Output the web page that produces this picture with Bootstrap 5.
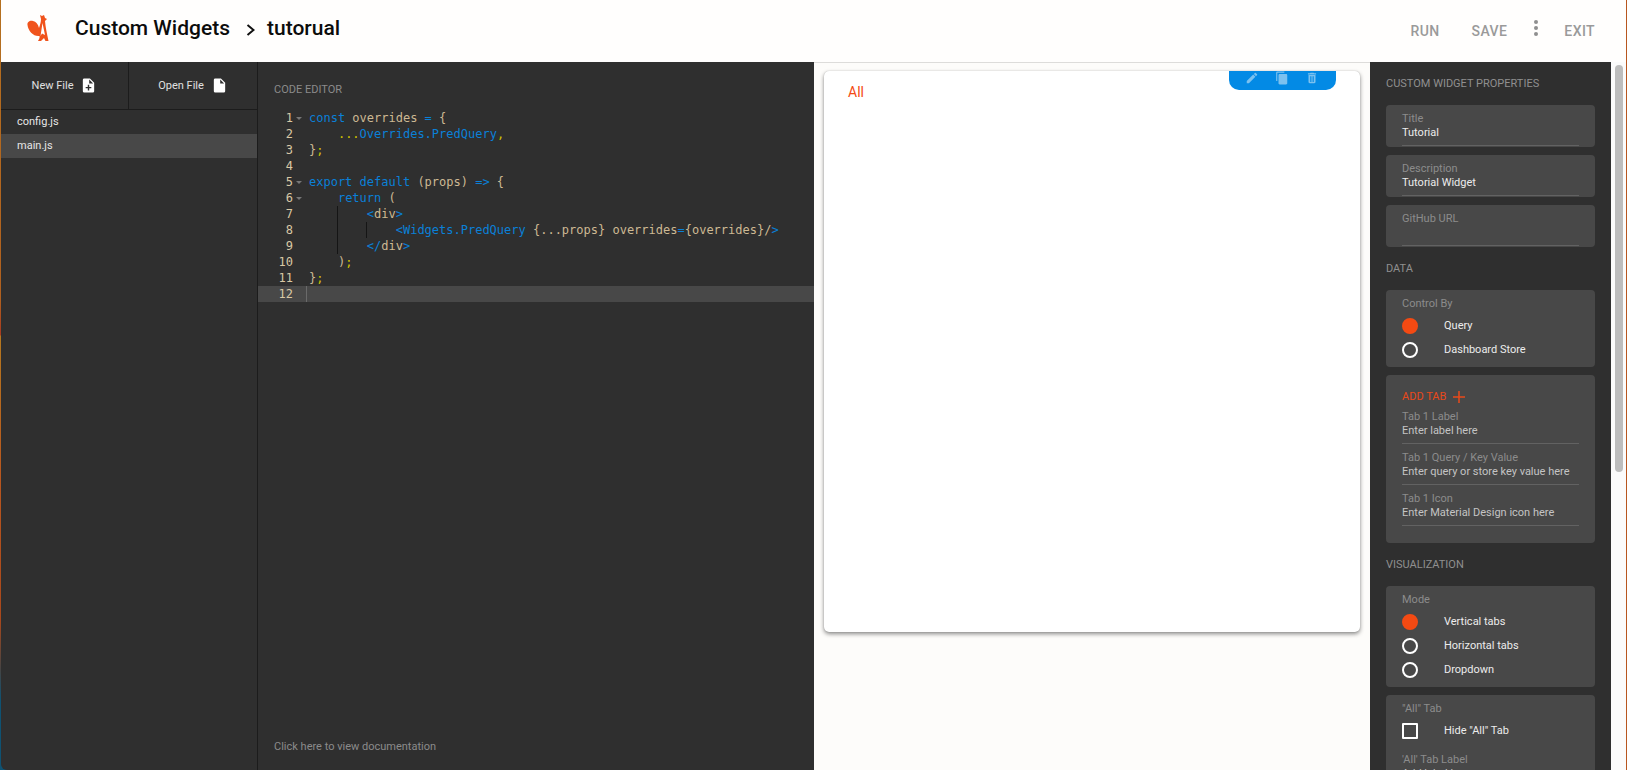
<!DOCTYPE html>
<html lang="en">
<head>
  <meta charset="UTF-8" />
  <meta name="viewport" content="width=device-width, initial-scale=1" />
  <title>Custom Widgets</title>
  <link href="https://cdn.jsdelivr.net/npm/bootstrap@5.3.0/dist/css/bootstrap.min.css" rel="stylesheet" />
  <style>
    html, body { height: 770px; overflow: hidden; }
    body { font-family: Roboto, "Liberation Sans", sans-serif; background: #fdfdfc; font-size: 11px; }
    .app-frame {
      height: 770px; padding-left: 1px; border-right: 1px solid #b8561f;
      background: linear-gradient(#b5701f 0, #b0601f 300px, #a83a20 335px, #b5781f 336px, #b8561f 480px, #a8481c 620px, #444 670px, #0f5272 700px) left top / 1px 100% no-repeat;
    }

    .top-bar { height: 62px; background: #fffefd; padding: 0 31px 0 25px; }
    .logo-svg { width: 26px; height: 28px; margin: -6px 23px 0 0; }
    .crumb { font-size: 21px; font-weight: 500; color: #0c0c0c; line-height: 1; margin-top: -6px; }
    .crumb-sep { width: 9px; height: 14px; margin: -3px 12px 0 16px; }
    .top-btn { font-size: 14px; font-weight: 500; color: #9a9a9a; letter-spacing: .4px; }
    .top-dots { width: 4px; margin: -4px 26px 0 27px; }
    .top-dots i { display: block; width: 4px; height: 4px; border-radius: 50%; background: #8f8f8f; margin-bottom: 2px; }

    .work-area { height: 708px; background: #0f5272; }
    .file-side { width: 257px; background: #2f2f2f; border-right: 1px solid #1c1c1c; color: #e6e6e6; border-bottom-left-radius: 6px; }
    .file-actions { height: 48px; border-bottom: 1px solid #1c1c1c; }
    .file-action { color: #e0e0e0; font-size: 11px; padding-top: 2px; }
    .file-new { width: 127px; }
    .file-open { flex: 1; border-left: 1px solid #1c1c1c; }
    .file-action svg { width: 17px; height: 17px; margin: -2px 0 0 7px; }
    .file-row { height: 24px; padding-left: 16px; line-height: 24px; }
    .file-row.is-open { background: #484848; }

    .editor-pane { width: 556px; background: #2f2f2f; }
    .pane-head { color: #8b8b8b; font-size: 11px; padding: 21px 0 0 16px; line-height: 14px; height: 48px; }
    .code-lines { font-family: "DejaVu Sans Mono", monospace; font-size: 12px; line-height: 16px; color: #cdb993; margin: 0; }
    .code-line { height: 16px; }
    .code-line.is-active { background: #484848; }
    .gutter-num { width: 35px; text-align: right; color: #d9c8a5; }
    .gutter-fold { width: 16px; position: relative; }
    .gutter-fold.has-fold::after { content: ""; position: absolute; left: 3px; top: 7px; border: 3px solid transparent; border-top: 3px solid #777; border-bottom: 0; }
    .code-text { white-space: pre; position: relative; }
    .is-active .code-text { border-left: 1px solid #6a6a6a; margin-left: -3px; height: 16px; }
    .tk-b { color: #0a80d8; }
    .tk-y { color: #cfc400; }
    .guide { position: absolute; top: 0; bottom: 0; width: 1px; background: #151515; }
    .doc-hint { color: #8b8b8b; font-size: 11px; padding: 0 0 15px 16px; }

    .preview-pane { width: 556px; background: #fdfcfa; border-top: 1px solid #dddcda; padding: 8px 10px 0 10px; }
    .widget-box { height: 561px; background: #fff; border-radius: 5px; box-shadow: 0 2px 4px rgba(0,0,0,.45), 0 0 1px rgba(0,0,0,.25); padding: 12px 0 0 24px; overflow: hidden; }
    .all-tab { color: #f44a13; font-size: 14px; line-height: 18px; }
    .tool-pill { position: absolute; top: 0; right: 24px; width: 107px; height: 19px; background: #038ae5; border-radius: 0 0 10px 10px; padding: 0 17px 6px 16px; }
    .tool-pill svg { width: 14px; height: 14px; fill: #7cc1ef; }

    .prop-pane { width: 241px; background: #2f2f2f; padding: 15px 16px 0 16px; overflow: hidden; color: #e6e6e6; }
    .prop-head { color: #8f8f8f; font-size: 11px; line-height: 14px; margin-bottom: 14px; }
    .prop-head-gap { margin-top: 15px; }
    .prop-group { background: #484848; border-radius: 4px; padding: 0 16px; margin-bottom: 8px; }
    .prop-field { height: 42px; padding-top: 7px; }
    .prop-label { color: #8c8c8c; font-size: 11px; line-height: 14px; }
    .prop-value { color: #ececec; font-size: 11px; line-height: 14px; height: 14px; }
    .prop-line { border-bottom: 1px solid #626262; margin-top: 5px; }
    .hint-value { color: #c4c4c4; }
    .tab-block { padding-top: 14px; height: 168px; }
    .add-tab { color: #e9491a; font-size: 11px; line-height: 16px; margin-bottom: 5px; }
    .add-tab svg { width: 12px; height: 12px; margin-left: 7px; }
    .tab-field { height: 41px; }
    .opt-row { height: 24px; }
    .opt-first { margin-top: 3px; }
    .opt-row .form-check-input { width: 16px; height: 16px; margin: 0 26px 0 0; background: transparent; border: 2px solid #fff; box-shadow: none; flex: none; }
    .opt-row .form-check-input:checked { background: #f44a13; background-image: none; border-color: #f44a13; }
    .opt-row .form-check-input[type=checkbox] { border-radius: 1px; }
    .opt-row label { color: #ececec; font-size: 11px; margin-top: 1px; }
    .opts-head { padding-top: 7px; }
    .opts-block { padding-bottom: 5px; }
    .all-label { margin-top: 10px; }

    .scroll-rail { width: 15px; background: #fbfbfb; padding: 3px 3px 0 4px; }
    .scroll-thumb { height: 407px; background: #bdbdbd; border-radius: 4px; }
  </style>
</head>
<body>

<div class="app-frame">
  <!-- header -->
  <header class="top-bar d-flex align-items-center">
    <svg class="logo-svg" viewBox="6 4 26 28">
      <path fill="#f0531c" d="M20 5l2 1 2-1 1 3 2 1-2 2c.5 6 2 13 3.500 20h-3L24 28l-3 3h-3c1-2 2-3 1.500-5C14 27 8 21 7.500 15 7 12 10 10 13 11c3 .5 5 3 6 7 1-3 2-6 2-9z"/>
      <path fill="#fff" d="M22.500 13L25 25l-3-1.500-1.500 2.500z"/>
    </svg>
    <span class="crumb">Custom Widgets</span>
    <svg class="crumb-sep" viewBox="0 0 9 14"><path d="M1.500 2l6 5-6 5" fill="none" stroke="#111" stroke-width="2"/></svg>
    <span class="crumb">tutorual</span>
    <div class="ms-auto d-flex align-items-center">
      <span class="top-btn me-4 pe-2">RUN</span>
      <span class="top-btn">SAVE</span>
      <span class="top-dots"><i></i><i></i><i></i></span>
      <span class="top-btn">EXIT</span>
    </div>
  </header>

  <div class="work-area d-flex">
    <!-- files -->
    <aside class="file-side flex-shrink-0">
      <div class="file-actions d-flex">
        <div class="file-action file-new d-flex align-items-center justify-content-center">New File
          <svg viewBox="0 0 24 24"><path fill="#fff" d="M14 2H6a2 2 0 00-2 2v16a2 2 0 002 2h12a2 2 0 002-2V8zm2 14h-3v3h-2v-3H8v-2h3v-3h2v3h3zm-3-7V3.500L18.500 9z"/></svg>
        </div>
        <div class="file-action file-open d-flex align-items-center justify-content-center">Open File
          <svg viewBox="0 0 24 24"><path fill="#fff" d="M6 2a2 2 0 00-2 2v16a2 2 0 002 2h12a2 2 0 002-2V8l-6-6zm7 7V3.500L18.500 9z"/></svg>
        </div>
      </div>
      <div class="file-row">config.js</div>
      <div class="file-row is-open">main.js</div>
    </aside>

    <!-- editor -->
    <section class="editor-pane flex-shrink-0 d-flex flex-column">
      <div class="pane-head">CODE EDITOR</div>
      <div class="code-lines flex-grow-1">
        <div class="code-line d-flex"><span class="gutter-num">1</span><span class="gutter-fold has-fold"></span><span class="code-text"><span class="tk-b">const</span> overrides <span class="tk-b">=</span> {</span></div>
        <div class="code-line d-flex"><span class="gutter-num">2</span><span class="gutter-fold"></span><span class="code-text">    <span class="tk-y">...</span><span class="tk-b">Overrides.PredQuery</span><span class="tk-y">,</span></span></div>
        <div class="code-line d-flex"><span class="gutter-num">3</span><span class="gutter-fold"></span><span class="code-text">}<span class="tk-y">;</span></span></div>
        <div class="code-line d-flex"><span class="gutter-num">4</span><span class="gutter-fold"></span><span class="code-text"></span></div>
        <div class="code-line d-flex"><span class="gutter-num">5</span><span class="gutter-fold has-fold"></span><span class="code-text"><span class="tk-b">export default</span> (props) <span class="tk-b">=&gt;</span> {</span></div>
        <div class="code-line d-flex"><span class="gutter-num">6</span><span class="gutter-fold has-fold"></span><span class="code-text">    <span class="tk-b">return</span> (</span></div>
        <div class="code-line d-flex"><span class="gutter-num">7</span><span class="gutter-fold"></span><span class="code-text">        <span class="tk-b">&lt;</span>div<span class="tk-b">&gt;</span><i class="guide" style="left:28px"></i></span></div>
        <div class="code-line d-flex"><span class="gutter-num">8</span><span class="gutter-fold"></span><span class="code-text">            <span class="tk-b">&lt;Widgets.PredQuery</span> {...props} overrides<span class="tk-b">=</span>{overrides}/<span class="tk-b">&gt;</span><i class="guide" style="left:28px"></i><i class="guide" style="left:57px"></i></span></div>
        <div class="code-line d-flex"><span class="gutter-num">9</span><span class="gutter-fold"></span><span class="code-text">        <span class="tk-b">&lt;/</span>div<span class="tk-b">&gt;</span><i class="guide" style="left:28px"></i></span></div>
        <div class="code-line d-flex"><span class="gutter-num">10</span><span class="gutter-fold"></span><span class="code-text">    )<span class="tk-y">;</span></span></div>
        <div class="code-line d-flex"><span class="gutter-num">11</span><span class="gutter-fold"></span><span class="code-text">}<span class="tk-y">;</span></span></div>
        <div class="code-line d-flex is-active"><span class="gutter-num">12</span><span class="gutter-fold"></span><span class="code-text"></span></div>
      </div>
      <div class="doc-hint">Click here to view documentation</div>
    </section>

    <!-- preview -->
    <section class="preview-pane flex-shrink-0">
      <div class="widget-box position-relative">
        <div class="all-tab">All</div>
        <div class="tool-pill d-flex align-items-center justify-content-between">
          <svg viewBox="0 0 24 24"><path d="M3 17.250V21h3.750L17.810 9.940l-3.750-3.750L3 17.250zM20.710 7.040a1 1 0 000-1.410l-2.340-2.340a1 1 0 00-1.410 0l-1.830 1.830 3.750 3.750 1.830-1.830z"/></svg>
          <svg viewBox="0 0 24 24"><path d="M16 1H4c-1.100 0-2 .9-2 2v14h2V3h12V1zm3 4H8c-1.100 0-2 .9-2 2v14c0 1.100.9 2 2 2h11c1.100 0 2-.9 2-2V7c0-1.100-.9-2-2-2z"/></svg>
          <svg viewBox="0 0 24 24"><path d="M6 19c0 1.100.9 2 2 2h8c1.100 0 2-.9 2-2V7H6v12zm3-10h2v10H9zm4 0h2v10h-2zM19 4h-3.500l-1-1h-5l-1 1H5v2h14V4z"/></svg>
        </div>
      </div>
    </section>

    <!-- properties -->
    <aside class="prop-pane flex-shrink-0">
      <div class="prop-head">CUSTOM WIDGET PROPERTIES</div>
      <div class="prop-group prop-field"><div class="prop-label">Title</div><div class="prop-value">Tutorial</div><div class="prop-line"></div></div>
      <div class="prop-group prop-field"><div class="prop-label">Description</div><div class="prop-value">Tutorial Widget</div><div class="prop-line"></div></div>
      <div class="prop-group prop-field"><div class="prop-label">GitHub URL</div><div class="prop-value"></div><div class="prop-line"></div></div>

      <div class="prop-head prop-head-gap">DATA</div>
      <div class="prop-group opts-head opts-block">
        <div class="prop-label">Control By</div>
        <div class="opt-row opt-first d-flex align-items-center"><input class="form-check-input" type="radio" name="ctl" id="ctlQuery" checked><label for="ctlQuery">Query</label></div>
        <div class="opt-row d-flex align-items-center"><input class="form-check-input" type="radio" name="ctl" id="ctlStore"><label for="ctlStore">Dashboard Store</label></div>
      </div>
      <div class="prop-group tab-block">
        <div class="add-tab d-flex align-items-center">ADD TAB
          <svg viewBox="0 0 12 12"><path d="M6 0v12M0 6h12" stroke="#e9491a" stroke-width="1.500"/></svg>
        </div>
        <div class="tab-field"><div class="prop-label">Tab 1 Label</div><div class="prop-value hint-value">Enter label here</div><div class="prop-line"></div></div>
        <div class="tab-field"><div class="prop-label">Tab 1 Query / Key Value</div><div class="prop-value hint-value">Enter query or store key value here</div><div class="prop-line"></div></div>
        <div class="tab-field"><div class="prop-label">Tab 1 Icon</div><div class="prop-value hint-value">Enter Material Design icon here</div><div class="prop-line"></div></div>
      </div>

      <div class="prop-head prop-head-gap">VISUALIZATION</div>
      <div class="prop-group opts-head opts-block">
        <div class="prop-label">Mode</div>
        <div class="opt-row opt-first d-flex align-items-center"><input class="form-check-input" type="radio" name="mode" id="modeV" checked><label for="modeV">Vertical tabs</label></div>
        <div class="opt-row d-flex align-items-center"><input class="form-check-input" type="radio" name="mode" id="modeH"><label for="modeH">Horizontal tabs</label></div>
        <div class="opt-row d-flex align-items-center"><input class="form-check-input" type="radio" name="mode" id="modeD"><label for="modeD">Dropdown</label></div>
      </div>
      <div class="prop-group opts-head">
        <div class="prop-label">"All" Tab</div>
        <div class="opt-row opt-first d-flex align-items-center"><input class="form-check-input" type="checkbox" id="hideAll"><label for="hideAll">Hide "All" Tab</label></div>
        <div class="prop-label all-label">'All' Tab Label</div>
        <div class="prop-value hint-value">Add label here</div>
      </div>
    </aside>

    <div class="scroll-rail flex-grow-1"><div class="scroll-thumb"></div></div>
  </div>
</div>

<script src="https://cdn.jsdelivr.net/npm/bootstrap@5.3.0/dist/js/bootstrap.bundle.min.js"></script>
</body>
</html>
